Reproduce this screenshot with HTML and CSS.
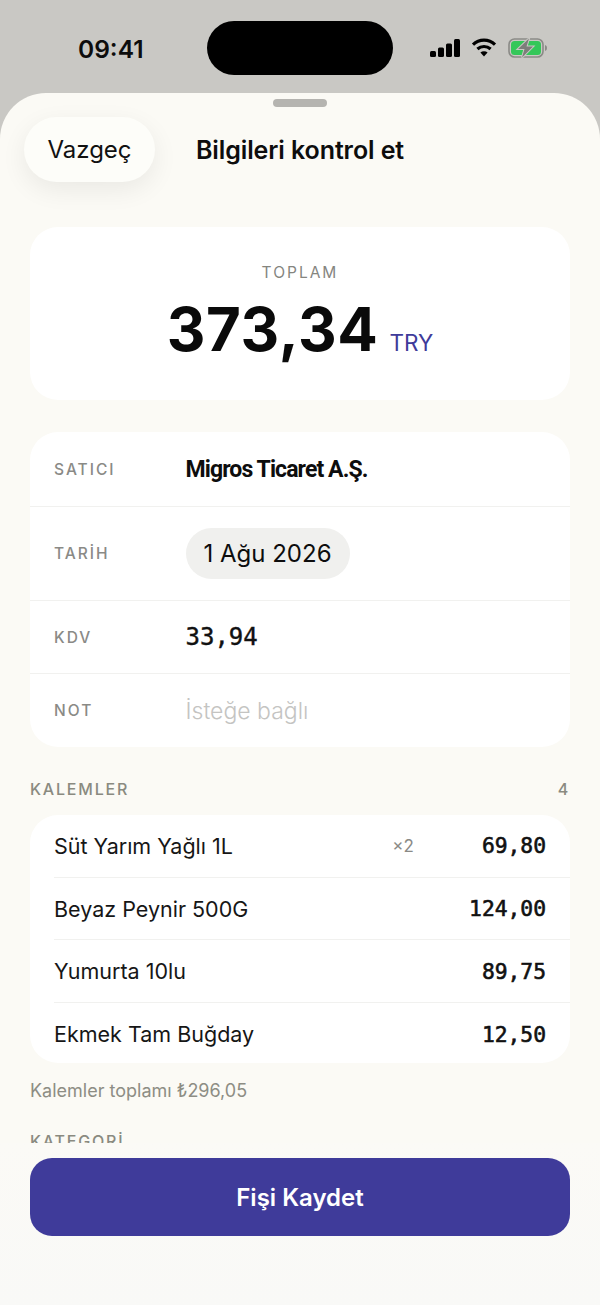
FILE: index.html
```html
<!DOCTYPE html>
<html lang="tr">
<head>
  <meta name="viewport" content="width=device-width, initial-scale=1.0">
  <title>Bilgileri kontrol et</title>
  <link rel="stylesheet" href="styles.css">
</head>
<body>

  <div class="status">
    <span class="time">09:41</span>
    <div class="island"></div>
    <div class="status-icons">
      <svg width="30" height="18" viewBox="0 0 30 18"><rect x="0" y="12" width="6" height="6" rx="1.5"/><rect x="8" y="8.5" width="6" height="9.5" rx="1.5"/><rect x="16" y="4.5" width="6" height="13.5" rx="1.5"/><rect x="24" y="0" width="6" height="18" rx="1.5"/></svg>
      <svg width="26" height="19" viewBox="0 0 26 19" fill="none" stroke="#000" stroke-width="3.2"><path d="M2 6.6a16 16 0 0 1 22 0"/><path d="M6.4 11a10 10 0 0 1 13.2 0"/><path d="M13 18.6l-3.6-4a5.2 5.2 0 0 1 7.2 0z" fill="#000" stroke="none"/></svg>
      <svg width="40" height="20" viewBox="0 0 40 20"><rect x="1" y="1" width="34" height="18" rx="5.500" fill="none" stroke="#8a8a86" stroke-width="1.6"/><rect x="3" y="3" width="30" height="14" rx="3.500" fill="#34c759"/><path d="M37 7v6a3 3 0 0 0 2-3 3 3 0 0 0-2-3z" fill="#8a8a86"/><path d="M21 0.500L10 11h6.500l-2.500 8.500 11-11h-6.500z" fill="#7d7d7a" stroke="#c9c8c4" stroke-width="2" paint-order="stroke"/></svg>
    </div>
  </div>

  <div class="sheet">
    <div class="grabber"></div>

    <div class="sheet-head">
      <button class="cancel">Vazgeç</button>
      <h1 class="title">Bilgileri kontrol et</h1>
    </div>

    <div class="content">
      <div class="card total">
        <div class="total-label">TOPLAM</div>
        <div class="total-value">373,34<span class="currency">TRY</span></div>
      </div>

      <div class="card fields">
        <div class="field field-a"><span class="field-label">SATICI</span><span class="vendor">Migros Ticaret A.Ş.</span></div>
        <div class="field field-b"><span class="field-label">TARİH</span><span class="date">1 Ağu 2026</span></div>
        <div class="field field-c"><span class="field-label">KDV</span><span class="mono kdv">33,94</span></div>
        <div class="field field-c"><span class="field-label">NOT</span><span class="hint">İsteğe bağlı</span></div>
      </div>

      <div class="section-head"><span>KALEMLER</span><span>4</span></div>

      <div class="card items">
        <div class="item"><span class="item-name">Süt Yarım Yağlı 1L</span><span class="qty">×2</span><span class="mono">69,80</span></div>
        <div class="item"><span class="item-name">Beyaz Peynir 500G</span><span class="mono">124,00</span></div>
        <div class="item"><span class="item-name">Yumurta 10lu</span><span class="mono">89,75</span></div>
        <div class="item"><span class="item-name">Ekmek Tam Buğday</span><span class="mono">12,50</span></div>
      </div>

      <div class="items-sum">Kalemler toplamı ₺296,05</div>
      <div class="section-head cat-head"><span>KATEGORİ</span></div>
    </div>

    <div class="footer">
      <button class="save">Fişi Kaydet</button>
    </div>
  </div>

</body>
</html>
```

FILE: styles.css
```css
* { box-sizing: border-box; }
body {
  margin: 0;
  height: 1305px;
  overflow: hidden;
  display: flex;
  flex-direction: column;
  font-family: Inter, "Noto Sans", sans-serif;
  background-color: #c9c8c4;
  color: #0d0d0d;
}
button {
  font-family: inherit;
  border: none;
}

/* status bar */
.status {
  height: 93px;
  flex: none;
  position: relative;
  display: flex;
  justify-content: space-between;
  align-items: center;
  padding: 10px 52px 0 78px;
}
.time {
  font-size: 24.500px;
  font-weight: 600;
  margin-top: -6px;
}
.island {
  position: absolute;
  left: 207px;
  top: 21px;
  width: 186px;
  height: 54px;
  border-radius: 27px;
  background-color: #000;
}
.status-icons {
  display: flex;
  align-items: center;
  gap: 11px;
  margin-top: -8px;
}

/* sheet */
.sheet {
  flex: 1;
  position: relative;
  overflow: hidden;
  border-radius: 46px 46px 0 0;
  background-color: #fbfaf5;
}
.grabber {
  width: 54px;
  height: 8px;
  margin: 6px auto 0;
  border-radius: 4px;
  background-color: #b5b4b0;
}
.sheet-head {
  position: relative;
  display: flex;
  justify-content: center;
  align-items: center;
  height: 65px;
  margin-top: 10px;
}
.cancel {
  position: absolute;
  left: 24px;
  top: 0;
  width: 131px;
  height: 65px;
  border-radius: 33px;
  background-color: #fdfdf9;
  color: #111;
  font-size: 24px;
  box-shadow: 0 8px 26px rgba(0, 0, 0, 0.07);
}
.title {
  margin: 0;
  font-size: 25px;
  font-weight: 600;
  letter-spacing: -0.1px;
}

.content {
  padding: 45px 30px 0;
}
.card {
  background-color: #fff;
  border-radius: 28px;
  overflow: hidden;
}

/* total */
.total {
  height: 173px;
  padding-top: 36px;
  text-align: center;
}
.total-label {
  font-size: 15.500px;
  font-weight: 400;
  letter-spacing: 2px;
  line-height: 20px;
  color: #85857f;
}
.total-value {
  margin-top: 10px;
  font-size: 60px;
  font-weight: 700;
  letter-spacing: 0.6px;
  line-height: 72px;
  color: #0a0a0a;
}
.currency {
  margin-left: 11px;
  font-size: 22.500px;
  font-weight: 400;
  letter-spacing: 0;
  color: #3f3b9a;
}

/* fields */
.fields {
  margin-top: 32px;
  height: 315px;
}
.field {
  display: flex;
  align-items: center;
  padding-left: 24px;
  border-bottom: 1px solid #f1f1ef;
}
.field:last-child { border-bottom: none; }
.field-a { height: 75px; }
.field-b { height: 94px; }
.field-c { height: 73px; }
.field-label {
  width: 131.500px;
  font-size: 15.500px;
  font-weight: 500;
  letter-spacing: 2px;
  color: #8a8a86;
}
.vendor {
  font-family: Roboto, Inter, sans-serif;
  font-size: 23px;
  font-weight: 700;
  letter-spacing: -0.9px;
}
.date {
  height: 51px;
  line-height: 51px;
  padding: 0 18px;
  border-radius: 26px;
  background-color: #f0f0ee;
  font-size: 24px;
}
.mono {
  font-family: "DejaVu Sans Mono", "Liberation Mono", monospace;
  font-size: 21.300px;
  -webkit-text-stroke: 0.6px #111;
  color: #111;
}
.kdv {
  font-size: 24px;
  -webkit-text-stroke: 0.4px #111;
}
.hint {
  font-size: 23px;
  font-weight: 300;
  letter-spacing: 0;
  color: #c4c4c2;
}

/* items */
.section-head {
  display: flex;
  justify-content: space-between;
  margin-top: 32px;
  font-size: 16px;
  font-weight: 500;
  letter-spacing: 1.800px;
  line-height: 20px;
  color: #8a8a80;
}
.items {
  margin-top: 16px;
  height: 248px;
}
.item {
  display: flex;
  align-items: center;
  height: 62.700px;
  margin-left: 24px;
  padding-right: 24px;
  border-bottom: 1px solid #f1f1ef;
}
.item:last-child { border-bottom: none; }
.item-name {
  flex: 1;
  font-size: 21.500px;
  color: #161616;
}
.qty {
  margin-right: 68px;
  font-size: 17px;
  color: #8a8a86;
}
.items-sum {
  margin-top: 17px;
  font-size: 18px;
  line-height: 22px;
  color: #8d8d84;
}
.cat-head {
  margin-top: 29px;
}

/* footer lies over the scrolled content */
.footer {
  position: absolute;
  left: 0;
  right: 0;
  bottom: 0;
  height: 162px;
  padding: 15px 30px 0;
  background: linear-gradient(#fbfaf6, #f9f9f7);
}
.save {
  width: 100%;
  height: 78px;
  border-radius: 22px;
  background-color: #3f3b9a;
  color: #fff;
  font-size: 24px;
  font-weight: 600;
}
```
